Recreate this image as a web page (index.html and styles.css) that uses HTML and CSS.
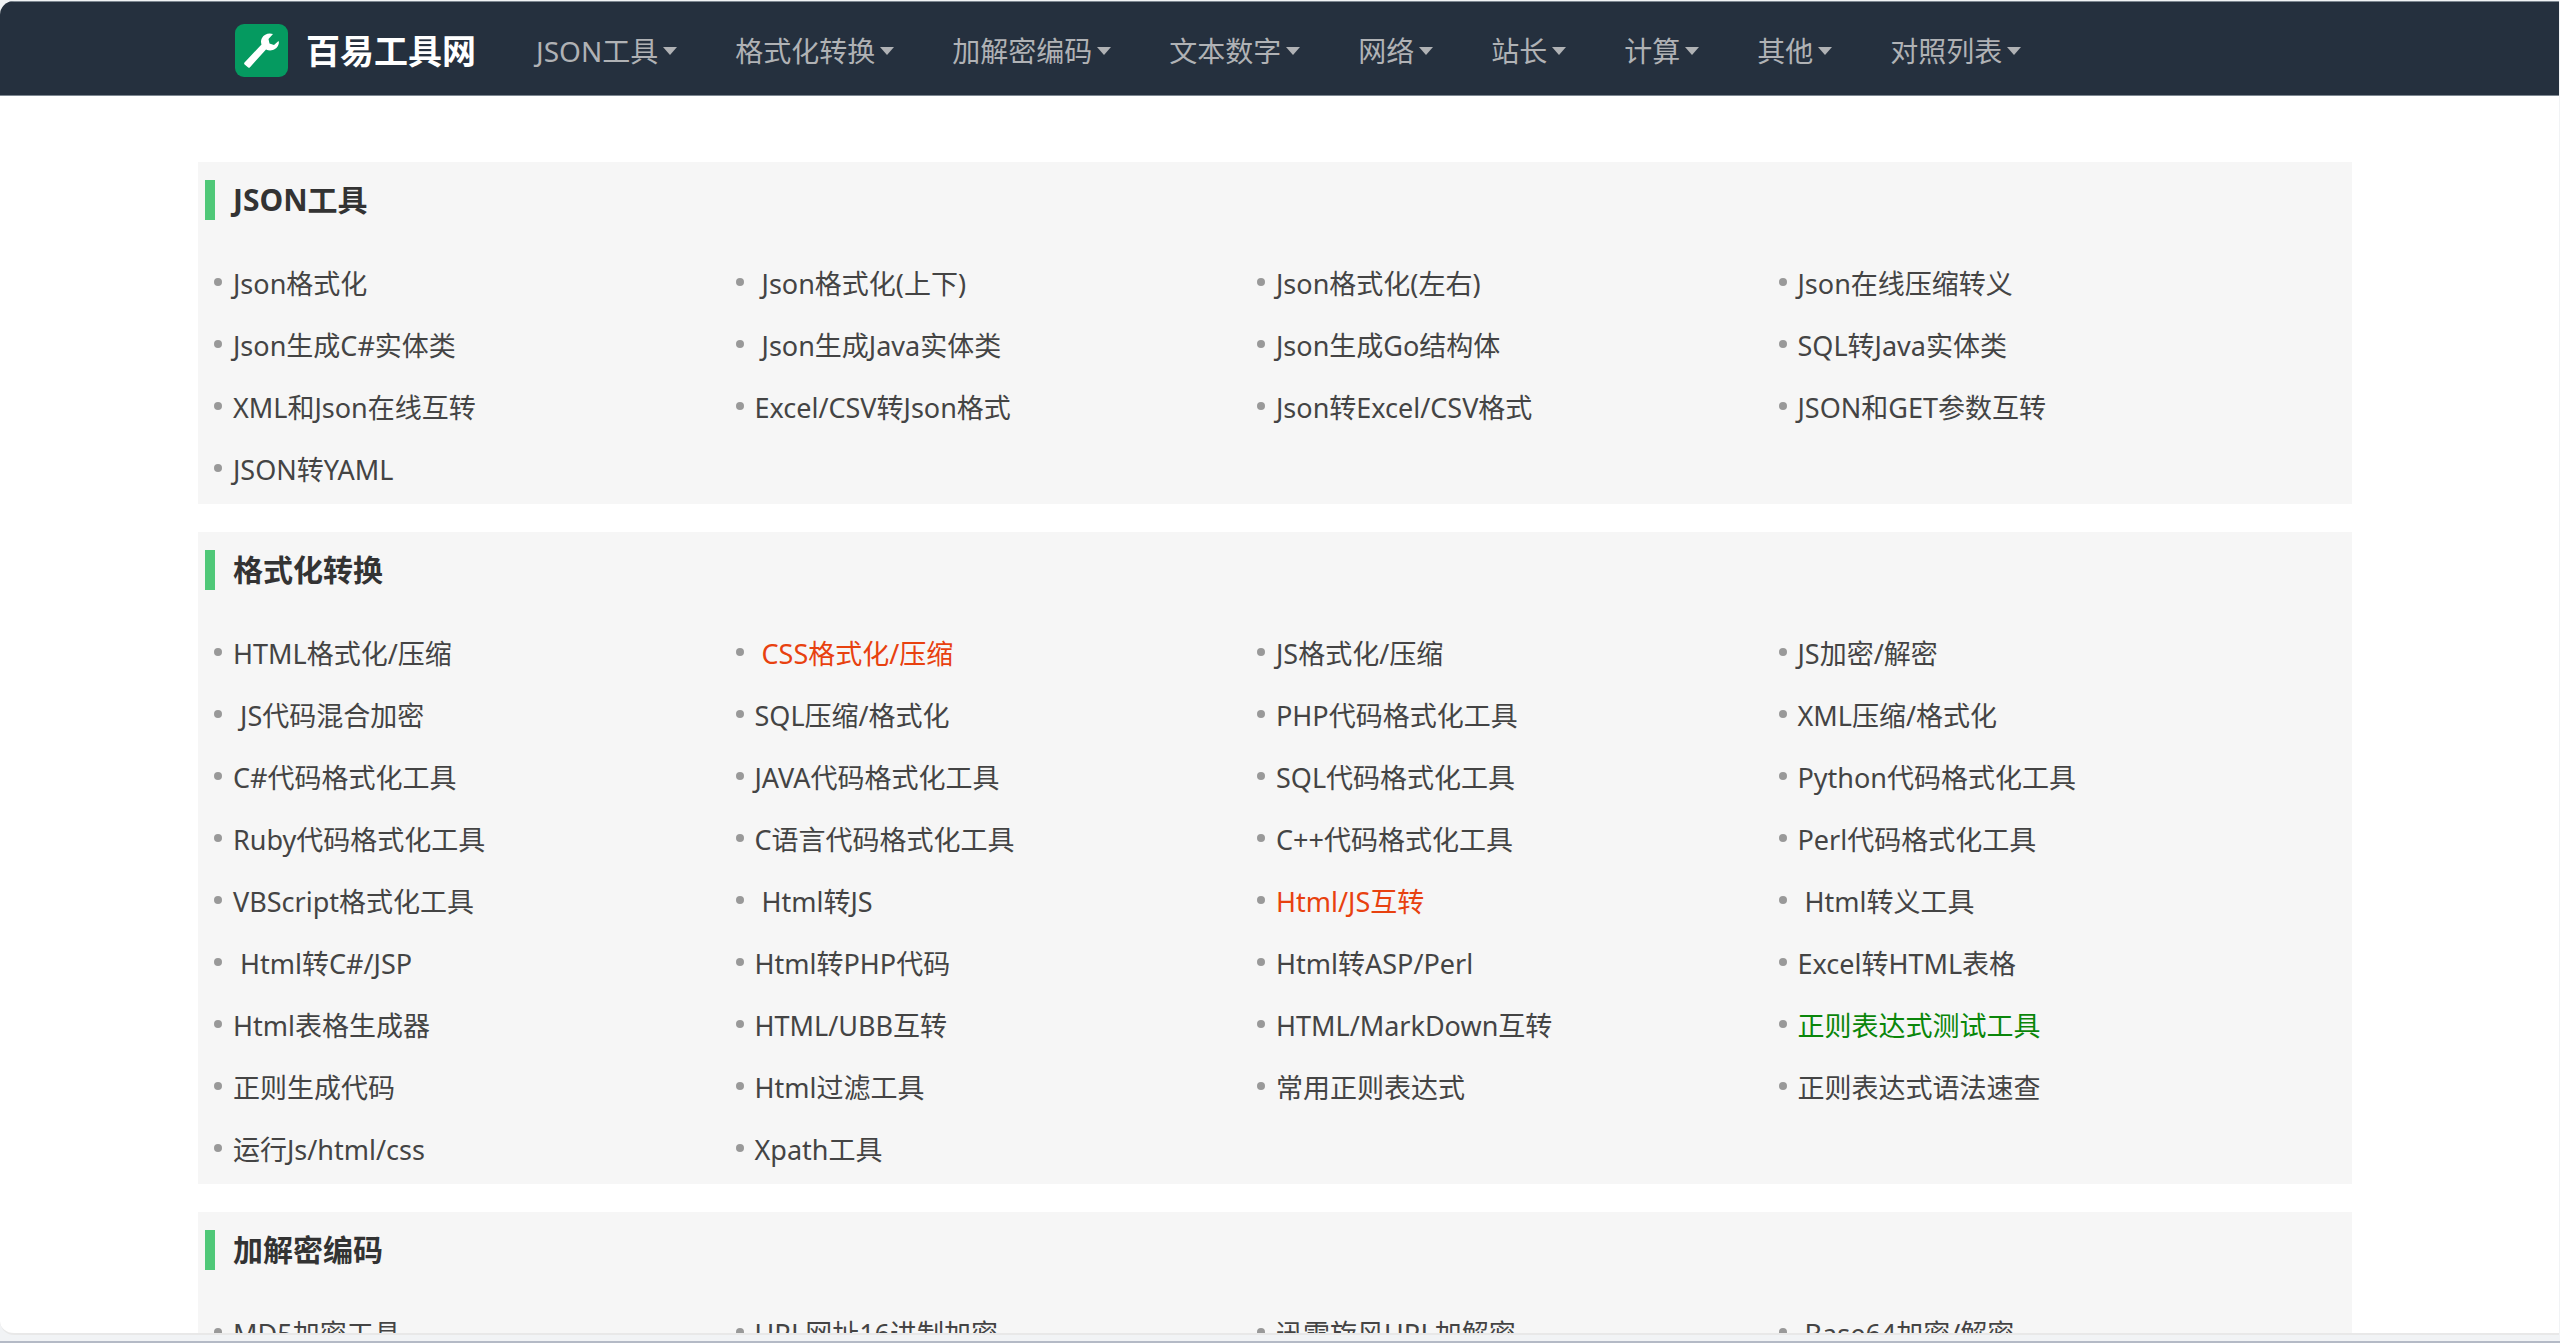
FILE: index.html
```html
<!DOCTYPE html>
<html lang="zh-CN">
<head>
<meta charset="utf-8">
<title>百易工具网</title>
<link rel="stylesheet" href="styles.css">
</head>
<body>
<div class="window">
<header class="topbar">
  <div class="topbar-inner">
    <a class="brand" href="#">
      <svg class="logo" viewBox="0 0 53 53" aria-hidden="true"><rect width="53" height="53" rx="9" fill="#059a60"/><path d="M38 10C34 8.500 29 10 27 14C25.500 17 26 19 26.500 20.500L9.500 38.500Q8.700 39.500 9.600 40.400L13.200 43.500Q14.200 44.200 15 43.200L31 25.500C36 28 42 25.500 43.500 20.500C44 19 44 18 43.500 17L39 21L34.500 19.500L33.500 15Z" fill="#fff"/></svg>
      <span>百易工具网</span>
    </a>
    <nav class="menu">
      <a href="#">JSON工具</a>
      <a href="#">格式化转换</a>
      <a href="#">加解密编码</a>
      <a href="#">文本数字</a>
      <a href="#">网络</a>
      <a href="#">站长</a>
      <a href="#">计算</a>
      <a href="#">其他</a>
      <a href="#">对照列表</a>
    </nav>
  </div>
</header>
<main class="content">
  <section class="panel">
    <h2>JSON工具</h2>
    <ul class="tools">
      <li><a href="#">Json格式化</a></li>
      <li>&nbsp;<a href="#">Json格式化(上下)</a></li>
      <li><a href="#">Json格式化(左右)</a></li>
      <li><a href="#">Json在线压缩转义</a></li>
      <li><a href="#">Json生成C#实体类</a></li>
      <li>&nbsp;<a href="#">Json生成Java实体类</a></li>
      <li><a href="#">Json生成Go结构体</a></li>
      <li><a href="#">SQL转Java实体类</a></li>
      <li><a href="#">XML和Json在线互转</a></li>
      <li><a href="#">Excel/CSV转Json格式</a></li>
      <li><a href="#">Json转Excel/CSV格式</a></li>
      <li><a href="#">JSON和GET参数互转</a></li>
      <li><a href="#">JSON转YAML</a></li>
    </ul>
  </section>
  <section class="panel">
    <h2>格式化转换</h2>
    <ul class="tools">
      <li><a href="#">HTML格式化/压缩</a></li>
      <li>&nbsp;<a class="hot" href="#">CSS格式化/压缩</a></li>
      <li><a href="#">JS格式化/压缩</a></li>
      <li><a href="#">JS加密/解密</a></li>
      <li>&nbsp;<a href="#">JS代码混合加密</a></li>
      <li><a href="#">SQL压缩/格式化</a></li>
      <li><a href="#">PHP代码格式化工具</a></li>
      <li><a href="#">XML压缩/格式化</a></li>
      <li><a href="#">C#代码格式化工具</a></li>
      <li><a href="#">JAVA代码格式化工具</a></li>
      <li><a href="#">SQL代码格式化工具</a></li>
      <li><a href="#">Python代码格式化工具</a></li>
      <li><a href="#">Ruby代码格式化工具</a></li>
      <li><a href="#">C语言代码格式化工具</a></li>
      <li><a href="#">C++代码格式化工具</a></li>
      <li><a href="#">Perl代码格式化工具</a></li>
      <li><a href="#">VBScript格式化工具</a></li>
      <li>&nbsp;<a href="#">Html转JS</a></li>
      <li><a class="hot" href="#">Html/JS互转</a></li>
      <li>&nbsp;<a href="#">Html转义工具</a></li>
      <li>&nbsp;<a href="#">Html转C#/JSP</a></li>
      <li><a href="#">Html转PHP代码</a></li>
      <li><a href="#">Html转ASP/Perl</a></li>
      <li><a href="#">Excel转HTML表格</a></li>
      <li><a href="#">Html表格生成器</a></li>
      <li><a href="#">HTML/UBB互转</a></li>
      <li><a href="#">HTML/MarkDown互转</a></li>
      <li><a class="good" href="#">正则表达式测试工具</a></li>
      <li><a href="#">正则生成代码</a></li>
      <li><a href="#">Html过滤工具</a></li>
      <li><a href="#">常用正则表达式</a></li>
      <li><a href="#">正则表达式语法速查</a></li>
      <li><a href="#">运行Js/html/css</a></li>
      <li><a href="#">Xpath工具</a></li>
    </ul>
  </section>
  <section class="panel">
    <h2>加解密编码</h2>
    <ul class="tools">
      <li><a href="#">MD5加密工具</a></li>
      <li><a href="#">URL网址16进制加密</a></li>
      <li><a href="#">迅雷旋风URL加解密</a></li>
      <li>&nbsp;<a href="#">Base64加密/解密</a></li>
    </ul>
  </section>
</main>
</div>
</body>
</html>
```
FILE: styles.css
```css
* { box-sizing: border-box; }
body {
  margin: 0;
  height: 100vh;
  padding: 1px 1px 6px 0;
  background: #f1f3f5;
  border-bottom: 2px solid #b4bac6;
  font-family: "Noto Sans", "Noto Sans CJK SC", sans-serif;
  font-size: 27px;
  color: #444;
  overflow: hidden;
}
a { color: inherit; text-decoration: none; }
.window {
  height: 100%;
  overflow: hidden;
  background: #fff;
  border-radius: 14px 0 0 14px;
  border-bottom: 2px solid #e8e8e8;
}
.topbar {
  background: #25303e;
  border-top: 1px solid #7d8791;
  border-bottom: 1px solid #7d8791;
}
.topbar-inner {
  display: flex;
  align-items: center;
  height: 93px;
  padding: 4px 0 0 235px;
}
.brand {
  display: flex;
  align-items: center;
  gap: 18px;
  color: #fff;
  font-size: 34px;
  font-weight: 700;
  line-height: 48px;
}
.logo { width: 53px; height: 53px; }
.menu {
  display: flex;
  gap: 58px;
  margin-left: 60px;
  color: #b0b2b5;
  font-size: 28px;
  line-height: 40px;
  white-space: nowrap;
}
.menu a { display: flex; align-items: center; gap: 5px; }
.menu a::after {
  content: "";
  border: 7px solid transparent;
  border-top: 8px solid;
  border-bottom: 0;
}
.content {
  display: grid;
  gap: 28px;
  padding: 66px 207px 0 198px;
}
.panel { background: #f6f6f6; padding: 18px 52px 5px 7px; }
.panel h2 {
  margin: 0 0 31px;
  padding-left: 18px;
  border-left: 10px solid #50c878;
  color: #333;
  font-size: 30px;
  line-height: 40px;
}
.tools {
  display: grid;
  grid-template-columns: repeat(4, 1fr);
  margin: 0;
  padding: 0 0 0 9px;
  list-style: none;
}
.tools li {
  display: flex;
  align-items: center;
  height: 62px;
  white-space: pre;
}
.tools li::before {
  content: "";
  width: 8px;
  height: 8px;
  margin-right: 11px;
  border-radius: 50%;
  background: #999;
}
.hot { color: #e8410f; }
.good { color: #0a860a; }
```
